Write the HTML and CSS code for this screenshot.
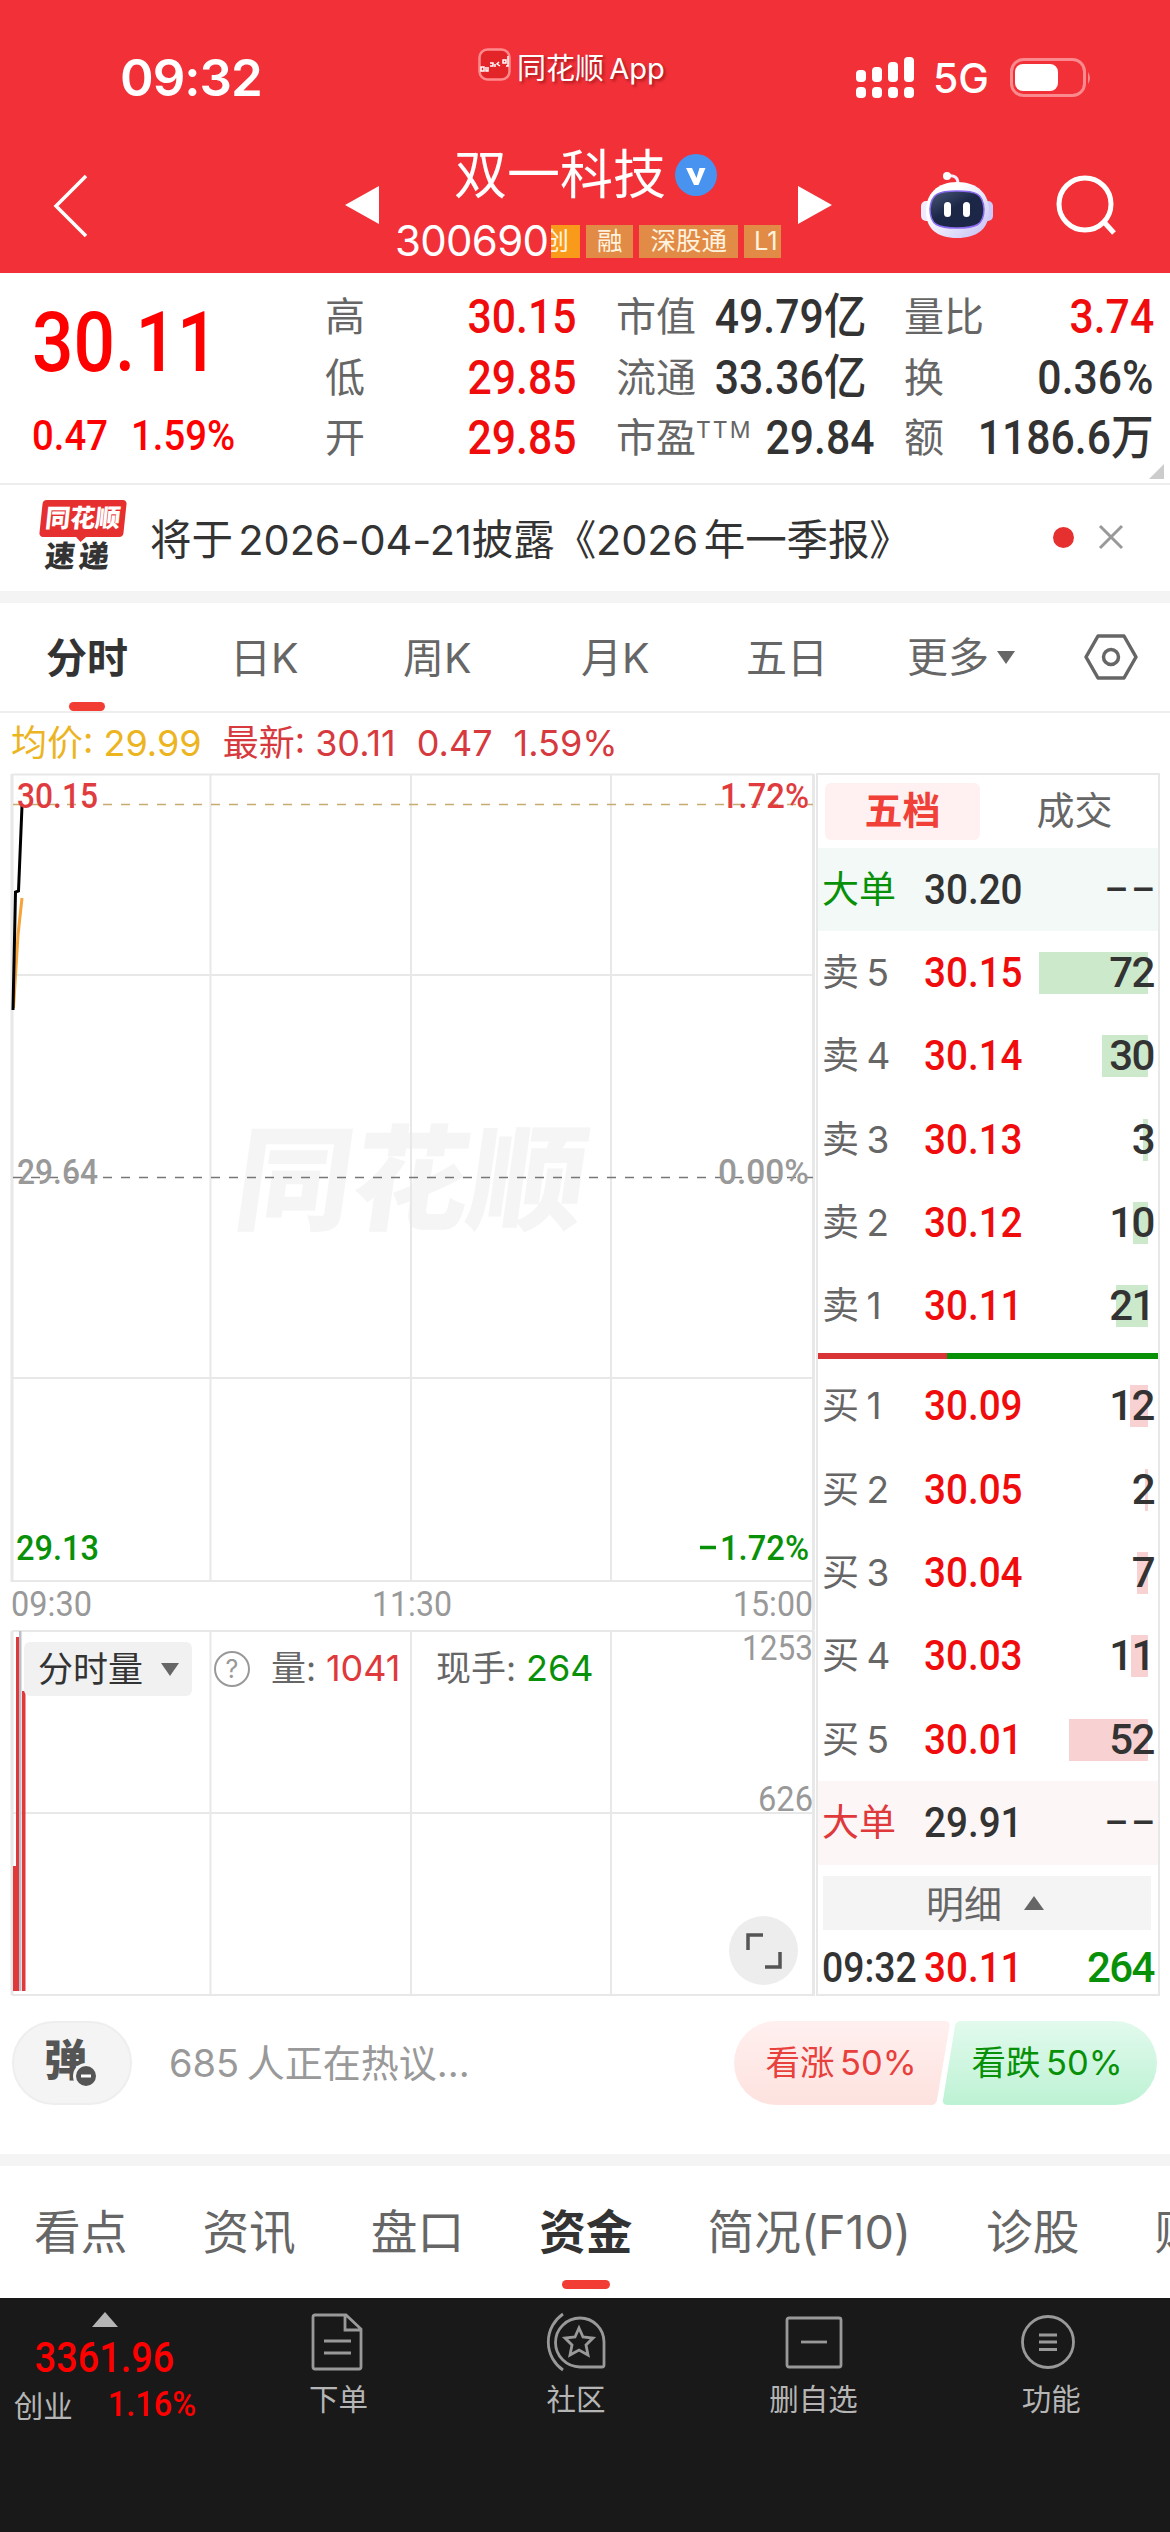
FILE: index.html
```html
<!DOCTYPE html>
<html lang="zh-CN">
<head>
  <meta charset="UTF-8" />
  <meta name="viewport" content="width=device-width, initial-scale=1.0"/>
  <title>双一科技 300690</title>
  <link rel="stylesheet" href="styles.css">
</head>
<body>

  <header class="top">
    <div class="status">
      <span class="clock">09:32</span>
      <div class="app-name">
        <svg width="34" height="34" viewBox="0 0 34 34">
          <rect x="1.5" y="1.5" width="30" height="30" rx="8" fill="#e32428" stroke="#ff8a8c" stroke-width="2.5"/>
          <path d="M3 19v4h3v-4zM8 19v4h2v-4M12 15h3v3h-3M17 16v3M21 14l-2 2 3 2M25 12v3h3v-3zM30 8v10h-2" fill="none" stroke="#fff" stroke-width="1.500"/>
        </svg>
        <span>同花顺 App</span>
      </div>
      <div class="status-right">
        <svg width="60" height="44" viewBox="0 0 60 44" fill="#fff">
          <rect x="0" y="14" width="10" height="12" rx="4"/>
          <rect x="16" y="11" width="10" height="15" rx="4"/>
          <rect x="32" y="6" width="10" height="20" rx="4"/>
          <rect x="48" y="1" width="10" height="25" rx="4"/>
          <rect x="0" y="31" width="10" height="11" rx="4"/>
          <rect x="16" y="31" width="10" height="11" rx="4"/>
          <rect x="32" y="31" width="10" height="11" rx="4"/>
          <rect x="48" y="31" width="10" height="11" rx="4"/>
        </svg>
        <span class="net">5G</span>
        <svg width="82" height="40" viewBox="0 0 82 40">
          <rect x="1.5" y="1.5" width="73" height="36" rx="12" fill="none" stroke="#fa8a8e" stroke-width="3"/>
          <rect x="5" y="6" width="43" height="27" rx="8" fill="#fff"/>
          <path d="M78 14q4 6 0 12z" fill="#fa8a8e"/>
        </svg>
      </div>
    </div>

    <div class="nav">
      <svg class="back" width="36" height="64" viewBox="0 0 36 64"><path d="M33 2L3 32l30 30" fill="none" stroke="#fff" stroke-width="3.5"/></svg>
      <svg class="prev" width="34" height="38" viewBox="0 0 34 38"><path d="M0 19L34 0v38z" fill="#fff"/></svg>
      <div class="stock">
        <div class="stock-name">
          <span>双一科技</span>
          <svg width="42" height="42" viewBox="0 0 42 42"><circle cx="21" cy="21" r="21" fill="#4793ef"/><path d="M11 14h6l4.500 10 3-10h6l-7 17h-4.500z" fill="#fff"/></svg>
        </div>
        <div class="stock-code">
          <span class="code">300690</span>
          <div class="tags">
            <span class="tag tag-first">创</span>
            <span class="tag">融</span>
            <span class="tag">深股通</span>
            <span class="tag tag-last">L1</span>
          </div>
        </div>
      </div>
      <svg class="next" width="34" height="38" viewBox="0 0 34 38"><path d="M34 19L0 0v38z" fill="#fff"/></svg>
      <svg class="robot" width="74" height="70" viewBox="0 0 74 70">
        <defs>
          <linearGradient id="shell" x1="0" y1="0" x2="1" y2="1">
            <stop offset="0.300" stop-color="#fff"/><stop offset="1" stop-color="#c3bdf3"/>
          </linearGradient>
          <linearGradient id="face" x1="0" y1="0" x2="0.800" y2="1">
            <stop offset="0" stop-color="#4b5878"/><stop offset="0.500" stop-color="#1c2748"/>
          </linearGradient>
        </defs>
        <path d="M38 14c0-7-4-9-10-8" fill="none" stroke="#f2eefc" stroke-width="3"/>
        <circle cx="27" cy="6" r="4" fill="#fff"/>
        <rect x="1" y="31" width="12" height="20" rx="5" fill="#efeafd"/>
        <rect x="61" y="31" width="12" height="20" rx="5" fill="#cfc8fa"/>
        <path d="M37 12c21 0 32 12 32 29 0 18-12 27-32 27S6 59 6 41c0-17 11-29 31-29z" fill="url(#shell)"/>
        <path d="M37 21c20 0 26 3 27 18 0 16-8 19-27 19s-27-3-27-19c1-15 8-18 27-18z" fill="url(#face)" stroke="#8a6cf0" stroke-width="1.500"/>
        <rect x="24" y="32" width="7" height="15" rx="3.500" fill="#fff"/>
        <rect x="43" y="32" width="7" height="15" rx="3.500" fill="#fff"/>
      </svg>
      <svg class="search" width="62" height="62" viewBox="0 0 62 62"><circle cx="29" cy="29" r="26" fill="none" stroke="#fff" stroke-width="5"/><path d="M48 47l10 11" stroke="#fff" stroke-width="5"/></svg>
    </div>
  </header>

  <section class="quote">
    <div class="price">
      <span class="num price-now">30.11</span>
      <div class="price-diff"><span class="num">0.47</span><span class="num">1.59%</span></div>
    </div>
    <div class="cell col-a"><label>高</label><span class="num red">30.15</span></div>
    <div class="cell col-b"><label>市值</label><span class="num">49.79亿</span></div>
    <div class="cell col-c"><label>量比</label><span class="num red">3.74</span></div>
    <div class="cell col-a"><label>低</label><span class="num red">29.85</span></div>
    <div class="cell col-b"><label>流通</label><span class="num">33.36亿</span></div>
    <div class="cell col-c"><label>换</label><span class="num">0.36%</span></div>
    <div class="cell col-a"><label>开</label><span class="num red">29.85</span></div>
    <div class="cell col-b"><label>市盈<sup>TTM</sup></label><span class="num">29.84</span></div>
    <div class="cell col-c"><label>额</label><span class="num">1186.6万</span></div>
    <i class="corner"></i>
  </section>

  <section class="notice">
    <div class="express">
      <span class="express-top">同花顺</span>
      <span class="express-bottom">速递</span>
    </div>
    <p>将于 2026-04-21披露《2026 年一季报》</p>
    <i class="dot"></i>
    <svg width="26" height="26" viewBox="0 0 26 26"><path d="M2 2l22 22M24 2L2 24" stroke="#999" stroke-width="3"/></svg>
  </section>

  <nav class="periods">
    <a class="period active">分时</a>
    <a class="period">日K</a>
    <a class="period">周K</a>
    <a class="period">月K</a>
    <a class="period">五日</a>
    <a class="period more">更多<svg width="20" height="13" viewBox="0 0 20 13"><path d="M1 0h18l-9 13z" fill="#666"/></svg></a>
    <svg class="setting" width="54" height="48" viewBox="0 0 54 48" fill="none" stroke="#666" stroke-width="3.500"><path d="M14 3h26l12 21-12 21H14L2 24z" stroke-linejoin="round"/><circle cx="27" cy="24" r="7.500"/></svg>
  </nav>

  <div class="summary">
    <span class="avg">均价: 29.99</span><span>最新: 30.11</span><span>0.47</span><span>1.59%</span>
  </div>

  <main class="board">
    <div class="charts">
      <svg class="chart-price" width="805" height="857" viewBox="10 773 805 857">
        <text class="watermark" transform="translate(231 1221) skewX(-8)" textLength="350" lengthAdjust="spacingAndGlyphs">同花顺</text>
        <g class="grid">
          <path d="M12 774.500H814M12 975H813M12 1378H813M12 1581H814M210.500 775V1580M411 775V1580M611 775V1580"/>
          <path d="M12 774V1582M813.500 774V1994" class="frame"/>
        </g>
        <path d="M13 804.500H813" stroke="#c8ab72" stroke-width="1.500" stroke-dasharray="9 9"/>
        <path d="M13 1177.500H813" stroke="#777" stroke-width="1.500" stroke-dasharray="9 9"/>
        <polyline points="13.500,1008 18,935 22,898" fill="none" stroke="#f5a33a" stroke-width="3"/>
        <polyline points="13,1010 15.500,892 18.500,891 22,806" fill="none" stroke="#000" stroke-width="3"/>
        <g class="axis">
          <text x="17" y="808" fill="#e03c40" textLength="81" lengthAdjust="spacingAndGlyphs">30.15</text>
          <text x="720" y="808" fill="#e03c40" textLength="89" lengthAdjust="spacingAndGlyphs">1.72%</text>
          <text x="17" y="1184" fill="#999" textLength="81" lengthAdjust="spacingAndGlyphs">29.64</text>
          <text x="718" y="1184" fill="#999" textLength="91" lengthAdjust="spacingAndGlyphs">0.00%</text>
          <text x="16" y="1560" fill="#089108" textLength="83" lengthAdjust="spacingAndGlyphs">29.13</text>
          <text x="720" y="1560" fill="#089108" textLength="89" lengthAdjust="spacingAndGlyphs">1.72%</text>
          <path d="M700 1547.500h16" stroke="#089108" stroke-width="3.500"/>
        </g>
        <g class="axis axis-time">
          <text x="11" y="1616" textLength="81" lengthAdjust="spacingAndGlyphs">09:30</text>
          <text x="372" y="1616" textLength="80" lengthAdjust="spacingAndGlyphs">11:30</text>
          <text x="733" y="1616" textLength="80" lengthAdjust="spacingAndGlyphs">15:00</text>
        </g>
      </svg>
      <div class="volume">
        <svg class="chart-volume" width="805" height="366" viewBox="10 1630 805 366">
          <g class="grid">
            <path d="M12 1631H814M12 1813H813M12 1995H815M210.500 1631V1995M411 1631V1995M611 1631V1995"/>
            <path d="M12 1631V1995M813.500 1631V1995" class="frame"/>
          </g>
          <path d="M13 1866h3V1991h-3zM16 1637h3V1991h-3zM22 1691h3.500V1991H22z" fill="#e0393b"/>
          <path d="M19 1631h2.500V1991H19z" fill="#b9c0cc"/>
          <g class="axis axis-time">
            <text x="742" y="1660" textLength="71" lengthAdjust="spacingAndGlyphs">1253</text>
            <text x="758" y="1811" textLength="55" lengthAdjust="spacingAndGlyphs">626</text>
          </g>
        </svg>
        <div class="volume-bar">
          <span class="volume-btn">分时量<svg width="18" height="13" viewBox="0 0 18 13"><path d="M0 0h18l-9 13z" fill="#666"/></svg></span>
          <span class="help">?</span>
          <span class="volume-label">量: <b class="red-soft">1041</b></span>
          <span class="volume-label">现手: <b class="green">264</b></span>
        </div>
        <div class="expand">
          <svg width="38" height="38" viewBox="0 0 38 38"><path d="M3 18V3h15M35 20v15H20" fill="none" stroke="#555" stroke-width="3.500"/></svg>
        </div>
      </div>
    </div>

    <aside class="orders">
      <div class="order-tabs"><span class="active">五档</span><span>成交</span></div>
      <div class="order big-sell"><span class="green">大单</span><span class="num">30.20</span><span class="dash">––</span></div>
      <div class="order sell"><span>卖 5</span><span class="num red">30.15</span><span class="num vol"><i style="width:109px"></i>72</span></div>
      <div class="order sell"><span>卖 4</span><span class="num red">30.14</span><span class="num vol"><i style="width:46px"></i>30</span></div>
      <div class="order sell"><span>卖 3</span><span class="num red">30.13</span><span class="num vol"><i style="width:5px"></i>3</span></div>
      <div class="order sell"><span>卖 2</span><span class="num red">30.12</span><span class="num vol"><i style="width:15px"></i>10</span></div>
      <div class="order sell"><span>卖 1</span><span class="num red">30.11</span><span class="num vol"><i style="width:32px"></i>21</span></div>
      <div class="ratio"><i style="width:38%"></i></div>
      <div class="order buy"><span>买 1</span><span class="num red">30.09</span><span class="num vol"><i style="width:18px"></i>12</span></div>
      <div class="order buy"><span>买 2</span><span class="num red">30.05</span><span class="num vol"><i style="width:3px"></i>2</span></div>
      <div class="order buy"><span>买 3</span><span class="num red">30.04</span><span class="num vol"><i style="width:11px"></i>7</span></div>
      <div class="order buy"><span>买 4</span><span class="num red">30.03</span><span class="num vol"><i style="width:17px"></i>11</span></div>
      <div class="order buy"><span>买 5</span><span class="num red">30.01</span><span class="num vol"><i style="width:79px"></i>52</span></div>
      <div class="order big-buy"><span class="red-soft">大单</span><span class="num">29.91</span><span class="dash">––</span></div>
      <div class="detail"><span>明细</span><svg width="20" height="14" viewBox="0 0 20 14"><path d="M0 14h20L10 0z" fill="#666"/></svg></div>
      <div class="order tick"><span class="num">09:32</span><span class="num red">30.11</span><span class="num vol green">264</span></div>
    </aside>
  </main>

  <section class="talk">
    <div class="danmu">
      <span>弹</span>
      <svg width="26" height="26" viewBox="0 0 26 26"><circle cx="13" cy="13" r="11.500" fill="#555" stroke="#f4f4f4" stroke-width="3"/><path d="M8 13h10" stroke="#fff" stroke-width="3"/></svg>
    </div>
    <span class="talk-text">685 人正在热议...</span>
    <div class="vote">
      <svg class="vote-bg" width="424" height="84" viewBox="0 0 424 84">
        <defs>
          <linearGradient id="up" x1="0" y1="0" x2="0" y2="1"><stop offset="0" stop-color="#fff0ef"/><stop offset="1" stop-color="#fde2df"/></linearGradient>
          <linearGradient id="down" x1="0" y1="0" x2="0" y2="1"><stop offset="0" stop-color="#e2faed"/><stop offset="1" stop-color="#bdf2d4"/></linearGradient>
        </defs>
        <path d="M42 0H211q5 0 4.500 5L203 79q-1 5-6 5H42a42 42 0 0 1 0-84z" fill="url(#up)"/>
        <path d="M228 0H381a42 42 0 0 1 0 84H214q-6 0-5-5L221 5q1-5 7-5z" fill="url(#down)"/>
      </svg>
      <span class="vote-up">看涨 50%</span><span class="vote-down">看跌 50%</span>
    </div>
  </section>

  <nav class="sections">
    <a>看点</a>
    <a>资讯</a>
    <a>盘口</a>
    <a class="active">资金</a>
    <a>简况(F10)</a>
    <a>诊股</a>
    <a>财务</a>
  </nav>

  <footer class="toolbar">
    <div class="index">
      <svg width="26" height="15" viewBox="0 0 26 15"><path d="M0 15h26L13 0z" fill="#b5b5b5"/></svg>
      <span class="num index-value">3361.96</span>
      <div class="index-row"><span>创业</span><span class="num">1.16%</span></div>
    </div>
    <div class="tool">
      <svg width="60" height="60" viewBox="3 0 60 60"><path d="M10 3h31l15 14v38q0 2-2 2H10q-2 0-2-2V5q0-2 2-2zM40 3v15h16M19 29h27M19 41h27"/></svg>
      <span>下单</span>
    </div>
    <div class="tool">
      <svg width="60" height="60" viewBox="0 0 60 60"><path d="M34 6a24 24 0 0 0 0 49h22q2 0 2-2V30A24 24 0 0 0 34 6zM17 2a34 34 0 0 0 0 56M33 16l4 9 10 1-7 7 2 10-9-5-9 5 2-10-7-7 10-1z"/></svg>
      <span>社区</span>
    </div>
    <div class="tool">
      <svg width="60" height="60" viewBox="0 0 60 60"><rect x="3" y="6" width="54" height="49" rx="2"/><path d="M17 30h26"/></svg>
      <span>删自选</span>
    </div>
    <div class="tool">
      <svg width="60" height="60" viewBox="0 0 60 60"><circle cx="27" cy="30" r="25.500"/><path d="M18 23h18M18 30h18M18 37.500h18"/></svg>
      <span>功能</span>
    </div>
  </footer>

</body>
</html>
```
FILE: styles.css
```css
* {
  margin: 0;
  padding: 0;
  box-sizing: border-box;
}

body {
  width: 1170px;
  height: 2532px;
  overflow: hidden;
  background: #fff;
  color: #333;
  font-family: Inter, 'Noto Sans CJK SC', sans-serif;
}

svg {
  display: block;
  flex: none;
}

i {
  display: block;
}

/* narrow figures */
.num {
  font-family: Roboto, 'Noto Sans CJK SC', sans-serif;
  font-weight: 500;
  display: inline-block;
  transform: scaleX(0.89);
  transform-origin: right center;
  white-space: nowrap;
}

.red {
  color: #f00c0c;
}

.red-soft {
  color: #e0393b;
}

.green {
  color: #089108;
}

/* header */
.top {
  height: 273px;
  background: #f23038;
  color: #fff;
}

.status {
  height: 156px;
  display: flex;
  padding-left: 120px;
}

.clock {
  width: 358px;
  font-size: 51px;
  line-height: 156px;
  font-weight: 600;
  letter-spacing: -1px;
}

.app-name {
  width: 378px;
  height: 132px;
  display: flex;
  align-items: center;
  gap: 5px;
  font-size: 29px;
  word-spacing: -3px;
  text-shadow: 2px 2px 3px rgba(90, 0, 0, 0.5);
  white-space: nowrap;
}

.app-name svg {
  margin-top: -3px;
}

.status-right {
  display: flex;
  align-items: center;
}

.net {
  width: 77px;
  margin-left: 17px;
  font-size: 41px;
  font-weight: 500;
}

.nav {
  height: 117px;
  display: flex;
}

.back {
  margin: 18px 0 0 53px;
}

.prev {
  margin: 30px 0 0 256px;
}

.stock {
  width: 386px;
  margin-left: 16px;
}

.stock-name {
  height: 66px;
  margin-top: -14px;
  padding-left: 59px;
  display: flex;
  align-items: center;
  gap: 9px;
  font-size: 53px;
  line-height: 66px;
}

.stock-code {
  display: flex;
  height: 33px;
  margin-top: 17px;
}

.code {
  width: 157px;
  font-size: 42px;
  line-height: 32px;
  letter-spacing: -0.7px;
}

.tags {
  display: flex;
  gap: 6px;
}

.tag {
  height: 33px;
  padding: 0 11px;
  background: #e28b47;
  color: #fff3df;
  font-size: 25.500px;
  line-height: 32px;
  overflow: hidden;
  white-space: nowrap;
}

.tag-first {
  width: 29px;
  padding: 0 11px 0 0;
  background: #fa9a1a;
  direction: rtl;
}

.tag-last {
  width: 37px;
  padding: 0 0 0 10px;
}

.next {
  margin: 30px 0 0 17px;
}

.robot {
  margin: 14px 0 0 88px;
}

.search {
  margin: 19px 0 0 62px;
}

/* quote */
.quote {
  position: relative;
  height: 212px;
  padding: 14px 16px 0 32px;
  display: grid;
  grid-template-columns: 293px 251px 289px 289px;
  grid-template-rows: repeat(3, 60.500px);
  border-bottom: 2px solid #eee;
}

.price {
  grid-row: 1 / 4;
  color: #f00;
}

.price .num {
  transform-origin: left center;
}

.price-now {
  display: block;
  font-size: 84px;
  line-height: 112px;
  transform: scaleX(0.87);
}

.price-diff {
  display: flex;
  gap: 14px;
  font-size: 43px;
  line-height: 72px;
}

.price-diff .num {
  transform: scaleX(0.89);
}

.cell {
  display: flex;
  justify-content: space-between;
  font-size: 48px;
  line-height: 59px;
  white-space: nowrap;
}

.cell label {
  font-size: 40px;
  color: #666;
}

.cell sup {
  font-size: 23px;
  letter-spacing: 2px;
  line-height: 0;
}

.col-b {
  padding-left: 40px;
}

.col-c {
  padding-left: 39px;
}

.corner {
  position: absolute;
  right: 6px;
  bottom: 4px;
  border-left: 15px solid transparent;
  border-bottom: 15px solid #ccc;
}

/* notice */
.notice {
  height: 118px;
  padding: 0 46px 2px 39px;
  display: flex;
  align-items: center;
  border-bottom: 12px solid #f4f4f4;
}

.express {
  width: 84px;
  margin-right: 27px;
  text-align: center;
  font-weight: 900;
  transform: skewX(-6deg);
}

.express span {
  display: block;
}

.express-top {
  position: relative;
  height: 37px;
  border-radius: 4px;
  background: #e6302f;
  color: #fff;
  font-size: 25px;
  line-height: 36px;
}

.express-top::after {
  content: '';
  position: absolute;
  left: 37px;
  top: 37px;
  border: 5px solid transparent;
  border-top-color: #e6302f;
  border-bottom: 0;
}

.express-bottom {
  font-size: 30px;
  line-height: 38px;
  letter-spacing: 4px;
}

.notice p {
  width: 903px;
  font-size: 41.500px;
  word-spacing: -6px;
  letter-spacing: -0.100px;
  white-space: nowrap;
}

.dot {
  width: 21px;
  height: 21px;
  margin-right: 24px;
  border-radius: 50%;
  background: #e6302f;
  flex: none;
}

/* period tabs */
.periods {
  height: 110px;
  padding-left: 46px;
  display: grid;
  grid-template-columns: 184px 173px 178px 165px 161px 177px auto;
  justify-items: start;
  border-bottom: 2px solid #eee;
  color: #666;
  font-size: 41px;
  line-height: 110px;
}

.active {
  font-weight: 700;
}

.period.active,
.sections .active {
  position: relative;
  color: #333;
}

.period.active::after,
.sections .active::after {
  content: '';
  position: absolute;
  left: 50%;
  bottom: 0;
  width: 36px;
  height: 9px;
  margin-left: -18px;
  border-radius: 5px;
  background: #f23d34;
}

.period {
  height: 108px;
}

.more {
  display: flex;
  align-items: center;
  gap: 7px;
}

.setting {
  margin-top: 30px;
}

.summary {
  height: 60px;
  padding-left: 11px;
  display: flex;
  gap: 21px;
  color: #d63a3e;
  font-size: 36px;
  line-height: 60px;
}

.summary .avg {
  color: #ecb41f;
}

/* charts */
.board {
  height: 1223px;
  padding-left: 10px;
  display: flex;
}

.charts {
  width: 805px;
}

.grid path {
  fill: none;
  stroke: #e8e8e8;
  stroke-width: 2;
}

.grid .frame {
  stroke-width: 3;
}

.axis text {
  font: 500 35px Roboto, sans-serif;
}

.axis-time text {
  font-weight: 400;
  fill: #999;
}

.watermark {
  font: 900 114px 'Noto Sans CJK SC', sans-serif;
  fill: #f5f5f5;
}

.volume {
  position: relative;
  height: 366px;
}

.volume-bar {
  position: absolute;
  left: 14px;
  top: 12px;
  display: flex;
  align-items: center;
  height: 54px;
  color: #666;
  font-size: 35px;
  line-height: 52px;
  white-space: nowrap;
}

.volume-bar b {
  font-weight: 400;
  font-size: 36px;
}

.volume-btn {
  width: 168px;
  height: 54px;
  padding: 0 13px 0 14px;
  display: flex;
  align-items: center;
  justify-content: space-between;
  border-radius: 6px;
  background: #f1f1f1;
  color: #333;
}

.help {
  width: 36px;
  height: 36px;
  margin: 0 21px 0 22px;
  border: 2px solid #999;
  border-radius: 50%;
  color: #999;
  font-size: 25px;
  line-height: 32px;
  text-align: center;
}

.volume-label {
  width: 165px;
  margin-top: -3px;
}

.expand {
  position: absolute;
  left: 719px;
  bottom: 11px;
  width: 69px;
  height: 69px;
  display: flex;
  align-items: center;
  justify-content: center;
  border-radius: 50%;
  background: #ededed;
}

/* order book */
.orders {
  width: 344px;
  border: 2px solid #e8e8e8;
  margin-left: 1px;
}

.order-tabs {
  height: 73px;
  padding: 8px 6px 8px 7px;
  display: flex;
  justify-content: space-between;
  font-size: 38px;
  line-height: 54px;
  text-align: center;
  color: #666;
}

.order-tabs span {
  width: 155px;
}

.order-tabs .active {
  border-radius: 6px;
  background: #fff1f1;
  color: #f04038;
}

.order {
  height: 83.300px;
  padding: 0 4px 0 4px;
  display: grid;
  grid-template-columns: 102px 115px 1fr;
  align-items: center;
  font-size: 37px;
  line-height: 50px;
  word-spacing: -3px;
  color: #666;
  white-space: nowrap;
}

.order .num {
  font-size: 42px;
  color: #333;
  transform: scaleX(0.92);
  transform-origin: left center;
}

.order .num.red {
  color: #f00c0c;
}

.order .green {
  color: #089108;
}

.order .red-soft {
  color: #e0393b;
}

.order .vol {
  position: relative;
  text-align: right;
  letter-spacing: -1.500px;
  transform: none;
}

.order .vol.green {
  color: #089108;
}

.vol i {
  position: absolute;
  right: 6px;
  top: 4px;
  height: 42px;
  z-index: -1;
}

.sell i {
  background: #cce9cc;
}

.buy i {
  background: #f8d2d3;
}

.dash {
  margin-right: -4px;
  color: #333;
  font-family: Roboto, sans-serif;
  font-weight: 500;
  text-align: right;
  letter-spacing: 3px;
}

.big-sell {
  background: #f2f9f6;
}

.big-buy {
  background: #fdf6f6;
}

.ratio {
  height: 6px;
  margin: 5px 0 6px;
  background: #089108;
}

.ratio i {
  height: 6px;
  background: #d83436;
}

.detail {
  height: 54px;
  margin: 11px 7px 7px 5px;
  display: flex;
  align-items: center;
  justify-content: center;
  gap: 22px;
  background: #f4f4f4;
  color: #666;
  font-size: 38px;
}

.detail span {
  margin: -3px 0 0 -4px;
}

.tick {
  height: 62px;
}

.order.tick .num:first-child {
  transform: scaleX(0.89);
}

/* discussion */
.talk {
  height: 170px;
  padding: 25px 12px 0;
  display: flex;
  border-bottom: 12px solid #f4f4f4;
}

.danmu {
  position: relative;
  width: 120px;
  height: 84px;
  padding-left: 30px;
  border: 2px solid #eee;
  border-radius: 42px;
  background: #f4f4f4;
  color: #555;
  font-size: 43px;
  font-weight: 900;
  line-height: 74px;
}

.danmu svg {
  position: absolute;
  left: 59px;
  top: 40px;
}

.talk-text {
  width: 566px;
  margin-left: 37px;
  color: #999;
  font-size: 38px;
  line-height: 84px;
  word-spacing: -3px;
}

.vote {
  position: relative;
  width: 424px;
  height: 84px;
  display: flex;
  font-size: 34.500px;
  line-height: 84px;
  word-spacing: -4px;
}

.vote-bg {
  position: absolute;
  left: 0;
  top: 0;
}

.vote-up,
.vote-down {
  position: relative;
  width: 206px;
  padding-left: 31px;
  color: #e8403c;
  white-space: nowrap;
}

.vote-down {
  color: #089108;
}

.sections {
  height: 132px;
  padding-left: 34px;
  display: flex;
  gap: 75px;
  overflow: hidden;
  color: #666;
  font-size: 46.700px;
  line-height: 132px;
  white-space: nowrap;
}

.sections .active::after {
  bottom: 9px;
  width: 48px;
  margin-left: -24px;
}

/* bottom bar */
.toolbar {
  height: 234px;
  padding-top: 14px;
  display: flex;
  background: #191919;
  color: #b5b5b5;
}

.index {
  width: 220px;
  padding-right: 10px;
  display: flex;
  flex-direction: column;
  align-items: center;
}

.index .num {
  color: #f00;
  transform: scaleX(0.93);
}

.index .index-value {
  font-size: 42px;
  line-height: 61px;
  transform: scaleX(0.9);
  transform-origin: center;
}

.index-row {
  width: 182px;
  display: flex;
  justify-content: space-between;
  font-size: 29.500px;
  line-height: 37px;
}

.index-row .num {
  font-size: 35px;
  line-height: 34px;
}

.index-row > span:first-child {
  white-space: nowrap;
}

.tool {
  width: 238px;
  display: flex;
  flex-direction: column;
  align-items: center;
  font-size: 29.500px;
}

.tool svg {
  fill: none;
  stroke: #999;
  stroke-width: 2.800;
}

.tool span {
  margin-top: 4px;
}
```
